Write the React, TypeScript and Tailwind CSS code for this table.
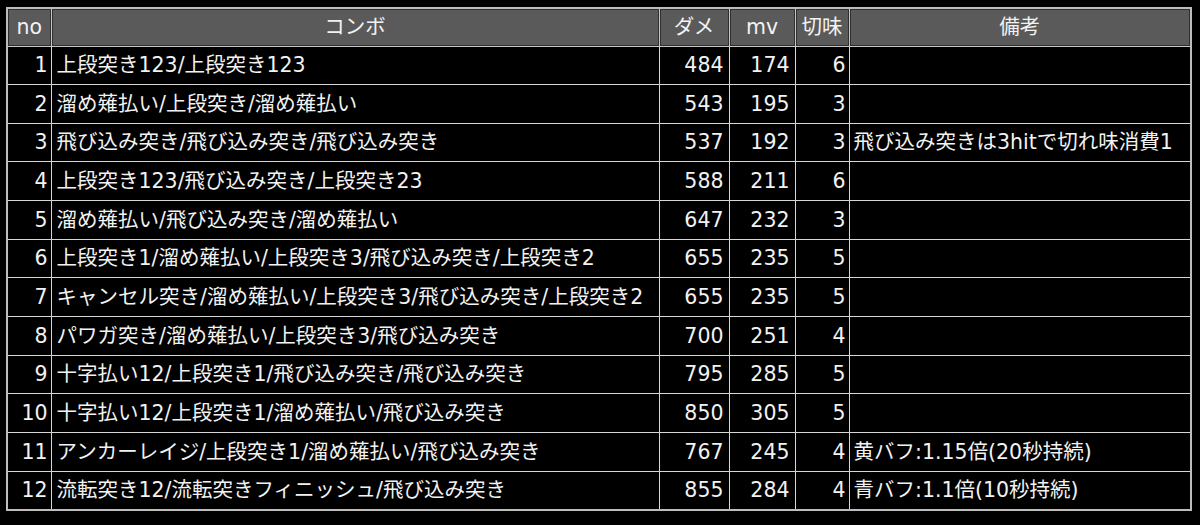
import React from "react";

type Row = {
  no: number;
  combo: string;
  dmg: number;
  mv: number;
  sharp: number;
  note?: string;
};

const rows: Row[] = [
  { no: 1, combo: "上段突き123/上段突き123", dmg: 484, mv: 174, sharp: 6 },
  { no: 2, combo: "溜め薙払い/上段突き/溜め薙払い", dmg: 543, mv: 195, sharp: 3 },
  {
    no: 3,
    combo: "飛び込み突き/飛び込み突き/飛び込み突き",
    dmg: 537,
    mv: 192,
    sharp: 3,
    note: "飛び込み突きは3hitで切れ味消費1",
  },
  { no: 4, combo: "上段突き123/飛び込み突き/上段突き23", dmg: 588, mv: 211, sharp: 6 },
  { no: 5, combo: "溜め薙払い/飛び込み突き/溜め薙払い", dmg: 647, mv: 232, sharp: 3 },
  {
    no: 6,
    combo: "上段突き1/溜め薙払い/上段突き3/飛び込み突き/上段突き2",
    dmg: 655,
    mv: 235,
    sharp: 5,
  },
  {
    no: 7,
    combo: "キャンセル突き/溜め薙払い/上段突き3/飛び込み突き/上段突き2",
    dmg: 655,
    mv: 235,
    sharp: 5,
  },
  { no: 8, combo: "パワガ突き/溜め薙払い/上段突き3/飛び込み突き", dmg: 700, mv: 251, sharp: 4 },
  { no: 9, combo: "十字払い12/上段突き1/飛び込み突き/飛び込み突き", dmg: 795, mv: 285, sharp: 5 },
  { no: 10, combo: "十字払い12/上段突き1/溜め薙払い/飛び込み突き", dmg: 850, mv: 305, sharp: 5 },
  {
    no: 11,
    combo: "アンカーレイジ/上段突き1/溜め薙払い/飛び込み突き",
    dmg: 767,
    mv: 245,
    sharp: 4,
    note: "黄バフ:1.15倍(20秒持続)",
  },
  {
    no: 12,
    combo: "流転突き12/流転突きフィニッシュ/飛び込み突き",
    dmg: 855,
    mv: 284,
    sharp: 4,
    note: "青バフ:1.1倍(10秒持続)",
  },
];

const th =
  "bg-[#5a5a5a] border border-[#c8c8c8] shadow-[inset_0_0_0_1px_#2e2e2e] font-normal text-center h-[38px] px-0";
const td = "border border-[#d6d6d6] h-[38.67px] whitespace-nowrap";

export default function App() {
  return (
    <div
      className="w-[1200px] h-[525px] bg-black text-[#f2f2f2] pt-[7px] pl-[6px] overflow-hidden"
      style={{ fontFamily: '"DejaVu Sans", "Noto Sans CJK JP", sans-serif' }}
    >
      <table className="border-collapse border-2 border-[#bdbdbd] text-[20.5px] leading-none table-fixed w-[1186px]">
        <colgroup>
          <col className="w-[44px]" />
          <col className="w-[608px]" />
          <col className="w-[70px]" />
          <col className="w-[66px]" />
          <col className="w-[54px]" />
          <col />
        </colgroup>
        <thead>
          <tr>
            <th className={th}>no</th>
            <th className={th}>コンボ</th>
            <th className={th}>ダメ</th>
            <th className={th}>mv</th>
            <th className={th}>切味</th>
            <th className={th}>備考</th>
          </tr>
        </thead>
        <tbody>
          {rows.map((r) => (
            <tr key={r.no}>
              <td className={`${td} text-right pr-[3px]`}>{r.no}</td>
              <td className={`${td} text-left pl-[5px]`}>{r.combo}</td>
              <td className={`${td} text-right pr-[5px]`}>{r.dmg}</td>
              <td className={`${td} text-right pr-[5px]`}>{r.mv}</td>
              <td className={`${td} text-right pr-[3px]`}>{r.sharp}</td>
              <td className={`${td} text-left pl-[4px]`}>{r.note ?? ""}</td>
            </tr>
          ))}
        </tbody>
      </table>
    </div>
  );
}
